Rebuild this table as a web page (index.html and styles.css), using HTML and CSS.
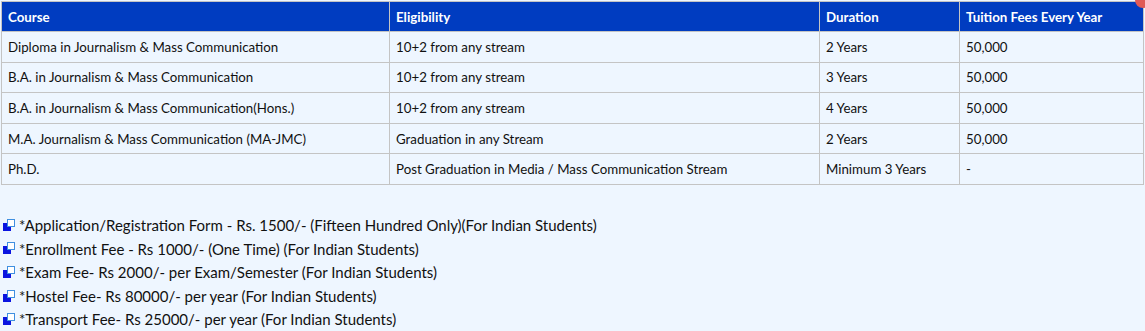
FILE: index.html
```html
<!DOCTYPE html>
<html>
<head>
<meta charset="utf-8">
<link rel="stylesheet" href="styles.css">
</head>
<body>
<span class="corner-dot"></span>
<table class="fees">
  <colgroup>
    <col class="c1"><col class="c2"><col class="c3"><col class="c4">
  </colgroup>
  <thead>
    <tr><th>Course</th><th>Eligibility</th><th>Duration</th><th>Tuition Fees Every Year</th></tr>
  </thead>
  <tbody>
    <tr><td>Diploma in Journalism &amp; Mass Communication</td><td>10+2 from any stream</td><td>2 Years</td><td>50,000</td></tr>
    <tr><td>B.A. in Journalism &amp; Mass Communication</td><td>10+2 from any stream</td><td>3 Years</td><td>50,000</td></tr>
    <tr><td>B.A. in Journalism &amp; Mass Communication(Hons.)</td><td>10+2 from any stream</td><td>4 Years</td><td>50,000</td></tr>
    <tr><td>M.A. Journalism &amp; Mass Communication (MA-JMC)</td><td>Graduation in any Stream</td><td>2 Years</td><td>50,000</td></tr>
    <tr><td>Ph.D.</td><td>Post Graduation in Media / Mass Communication Stream</td><td>Minimum 3 Years</td><td>-</td></tr>
  </tbody>
</table>
<ul class="notes">
  <li><span class="bullet"><svg width="12" height="12" viewBox="0 0 12 12"><rect x="0" y="4" width="8" height="8" fill="#0a14e0"/><rect x="4.5" y="0.5" width="7" height="7" fill="#ffffff" stroke="#3f8fe0" stroke-width="1"/></svg></span>*Application/Registration Form - Rs. 1500/- (Fifteen Hundred Only)(For Indian Students)</li>
  <li><span class="bullet"><svg width="12" height="12" viewBox="0 0 12 12"><rect x="0" y="4" width="8" height="8" fill="#0a14e0"/><rect x="4.5" y="0.5" width="7" height="7" fill="#ffffff" stroke="#3f8fe0" stroke-width="1"/></svg></span>*Enrollment Fee - Rs 1000/- (One Time) (For Indian Students)</li>
  <li><span class="bullet"><svg width="12" height="12" viewBox="0 0 12 12"><rect x="0" y="4" width="8" height="8" fill="#0a14e0"/><rect x="4.5" y="0.5" width="7" height="7" fill="#ffffff" stroke="#3f8fe0" stroke-width="1"/></svg></span>*Exam Fee- Rs 2000/- per Exam/Semester (For Indian Students)</li>
  <li><span class="bullet"><svg width="12" height="12" viewBox="0 0 12 12"><rect x="0" y="4" width="8" height="8" fill="#0a14e0"/><rect x="4.5" y="0.5" width="7" height="7" fill="#ffffff" stroke="#3f8fe0" stroke-width="1"/></svg></span>*Hostel Fee- Rs 80000/- per year (For Indian Students)</li>
  <li><span class="bullet"><svg width="12" height="12" viewBox="0 0 12 12"><rect x="0" y="4" width="8" height="8" fill="#0a14e0"/><rect x="4.5" y="0.5" width="7" height="7" fill="#ffffff" stroke="#3f8fe0" stroke-width="1"/></svg></span>*Transport Fee- Rs 25000/- per year (For Indian Students)</li>
</ul>
</body>
</html>
```
FILE: styles.css
```css
html, body {
  margin: 0;
  padding: 0;
  background: #eef6ff;
}
body {
  font-family: Lato, "Open Sans", sans-serif;
  color: #111111;
  position: relative;
  overflow: hidden;
}
.corner-dot {
  position: absolute;
  top: -8px;
  right: -6px;
  width: 16px;
  height: 16px;
  border-radius: 50%;
  background: #e05a57;
}
.fees {
  border-collapse: collapse;
  margin: 1px 0 0 1px;
  width: 1142px;
  table-layout: fixed;
  font-size: 13.3px;
}
.c1 { width: 388px; }
.c2 { width: 430px; }
.c3 { width: 140px; }
.c4 { width: 184px; }
.fees th, .fees td {
  border: 1px solid #c4c4c4;
  text-align: left;
  padding: 0 6px;
  height: 29.6px;
  white-space: nowrap;
}
.fees th {
  background: #003cc0;
  color: #ffffff;
  font-weight: bold;
  height: 29px;
}
.notes {
  list-style: none;
  margin: 29px 0 0 0;
  padding: 0 0 0 3px;
  font-size: 15px;
  line-height: 23.6px;
}
.notes li {
  display: flex;
  align-items: center;
}
.bullet {
  display: inline-flex;
  width: 16px;
  margin-top: -2px;
}
.bullet svg {
  width: 12px;
  height: 12px;
}
```
